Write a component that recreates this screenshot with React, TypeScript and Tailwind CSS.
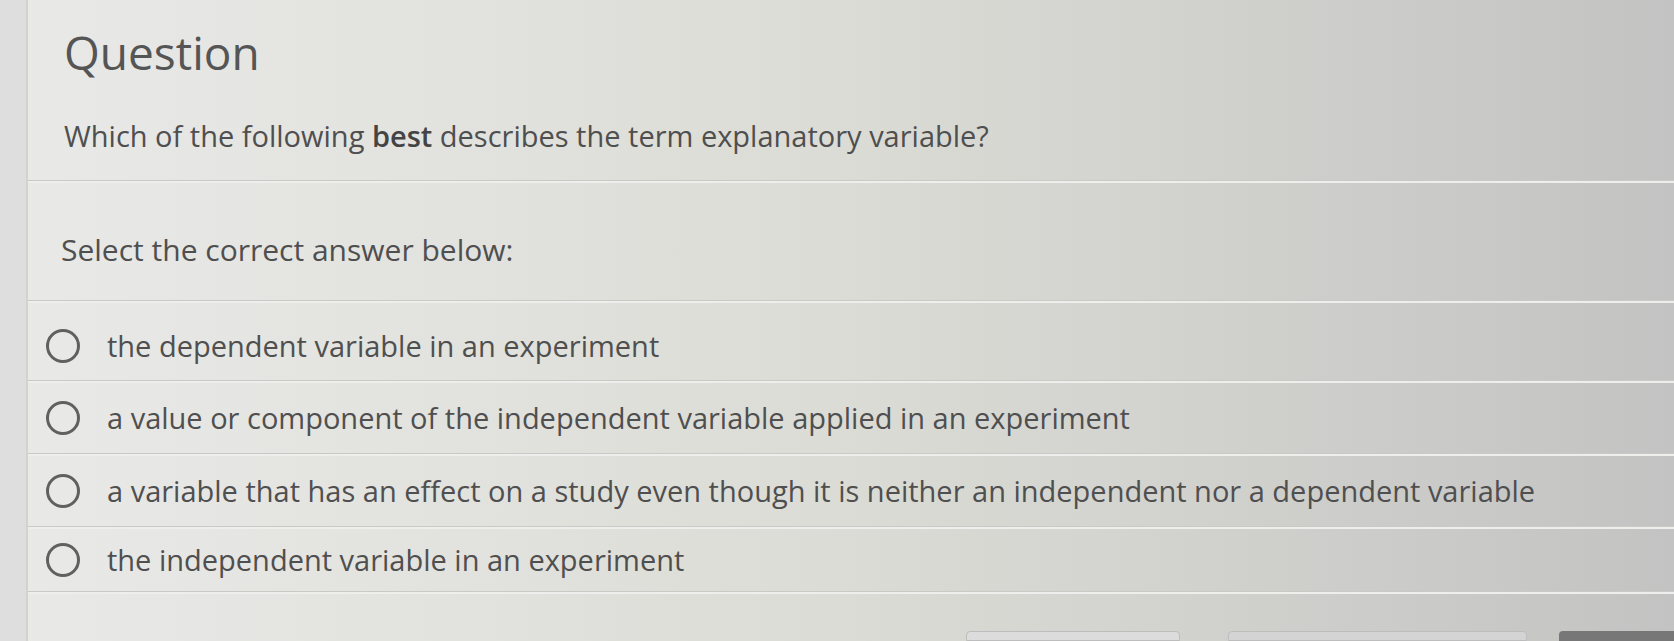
import React from 'react';

const options = [
  'the dependent variable in an experiment',
  'a value or component of the independent variable applied in an experiment',
  'a variable that has an effect on a study even though it is neither an independent nor a dependent variable',
  'the independent variable in an experiment',
];

const Divider = () => (
  <div className="h-[3px] w-full border-t border-[#c9c9c6] bg-[#eeeeec]" />
);

const Radio = () => (
  <div className="w-[34px] h-[34px] shrink-0 rounded-full border-[3px] border-[#606060]" />
);

export default function App() {
  return (
    <div
      className="w-full h-[641px] overflow-hidden flex bg-gradient-to-r from-[#e9e9e8] via-[#dcdcd6] to-[#c3c3c3] text-[#4f4f4f]"
      style={{ fontFamily: '"Open Sans", "Noto Sans", sans-serif' }}
    >
      <div className="w-[28px] shrink-0 border-r-2 border-[#d2d2d0] bg-[#dedede]" />
      <div className="flex-1 flex flex-col">
        {/* header */}
        <div className="h-[180px] flex flex-col pl-[36px] pt-[22px]">
          <h1 className="text-[46px] leading-[60px] font-medium text-[#555]">Question</h1>
          <p className="mt-[34px] text-[29px] leading-[40px]">
            Which of the following <span className="font-semibold text-[#444]">best</span> describes the
            term explanatory variable?
          </p>
        </div>
        <Divider />
        <div className="h-[117px] flex items-center pl-[33px] pt-[16px] text-[30px]">
          Select the correct answer below:
        </div>
        <Divider />
        {options.map((o, i) => (
          <React.Fragment key={i}>
            <div className={`${i === 0 ? 'h-[77px] pt-[8px]' : i === 3 ? 'h-[62px]' : 'h-[70px]'} flex items-center gap-[27px] pl-[18px] text-[29px]`}>
              <Radio />
              <span className="whitespace-nowrap">{o}</span>
            </div>
            <Divider />
          </React.Fragment>
        ))}
        <div className="flex-1 relative">
          <div className="absolute bottom-0 left-[938px] w-[214px] h-[10px] border border-[#bdbdbd] rounded-t-sm bg-[#dcdcdc]" />
          <div className="absolute bottom-0 left-[1200px] w-[299px] h-[10px] border border-[#bdbdbd] rounded-t-sm bg-[#d4d4d4]" />
          <div className="absolute bottom-0 left-[1531px] w-[120px] h-[10px] rounded-t-sm bg-[#777]" />
        </div>
      </div>
    </div>
  );
}
